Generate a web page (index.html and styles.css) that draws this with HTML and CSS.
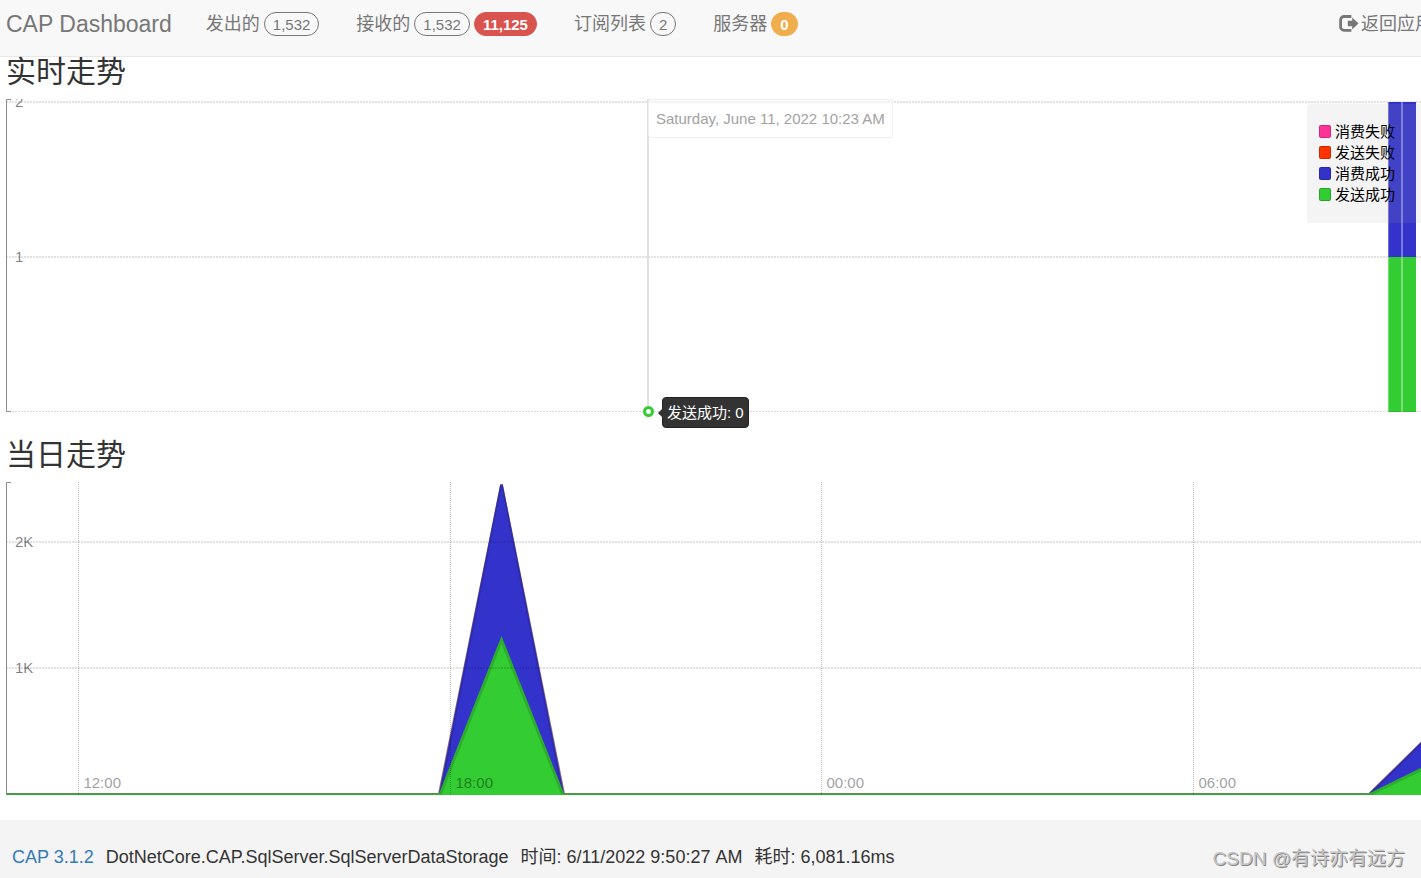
FILE: index.html
```html
<!DOCTYPE html>
<html lang="zh-CN">
<head>
<meta charset="utf-8">
<title>CAP Dashboard</title>
<link rel="stylesheet" href="styles.css">
</head>
<body>
<header class="navbar">
  <a class="brand" href="#">CAP Dashboard</a>
  <nav class="nav">
    <a class="nav-item" href="#published">发出的 <span class="badge">1,532</span></a>
    <a class="nav-item" href="#received">接收的 <span class="badge">1,532</span><span class="badge badge-danger">11,125</span></a>
    <a class="nav-item" href="#subscribers">订阅列表 <span class="badge">2</span></a>
    <a class="nav-item" href="#nodes">服务器 <span class="badge badge-warning">0</span></a>
  </nav>
  <a class="back" href="#app">
    <svg class="back-icon" width="20" height="18" viewBox="0 0 20 18" aria-hidden="true">
      <path d="M12.4 1.5H5A3.4 3.4 0 0 0 1.6 4.9v7A3.4 3.4 0 0 0 5 15.3h7.4" fill="none" stroke="currentColor" stroke-width="2.8"/>
      <path d="M8.8 5.8h4.4V2.6l6.3 5.9-6.3 5.9v-3.2H8.8z" fill="currentColor" stroke="#f8f8f8" stroke-width=".8" paint-order="stroke"/>
    </svg>返回应用</a>
</header>
<main class="page">
  <h3 class="title">实时走势</h3>
  <div class="chart">
    <svg class="plot" role="img" aria-label="实时走势">
      <g class="grid">
        <line x1="0" y1="3" x2="100%" y2="3"/>
        <line x1="0" y1="158" x2="100%" y2="158"/>
      </g>
      <svg class="anchor" x="100%">
        <rect class="fill-blue" x="-33" y="3" width="28" height="155"/>
        <rect class="fill-green" x="-33" y="158" width="28" height="155"/>
        <rect class="bar-edge" x="-33" y="3" width="1" height="310"/>
        <rect class="bar-gap" x="-20" y="3" width="2" height="310"/>
      </svg>
      <g class="grid">
        <line class="grid-base" x1="0" y1="312.5" x2="100%" y2="312.5"/>
      </g>
      <path class="axis" d="M5 .5H.5v312H5"/>
      <text class="tick tick-y" x="9" y="8">2</text>
      <text class="tick tick-y" x="9" y="163">1</text>
    </svg>
    <div class="cursor">
      <div class="cursor-date">Saturday, June 11, 2022 10:23 AM</div>
      <span class="cursor-dot"></span>
      <div class="cursor-value">发送成功: 0</div>
    </div>
    <ul class="legend">
      <li class="legend-row"><span class="swatch swatch-pink"></span>消费失败</li>
      <li class="legend-row"><span class="swatch swatch-red"></span>发送失败</li>
      <li class="legend-row"><span class="swatch swatch-blue"></span>消费成功</li>
      <li class="legend-row"><span class="swatch swatch-green"></span>发送成功</li>
    </ul>
  </div>
  <h3 class="title title-next">当日走势</h3>
  <div class="chart">
    <svg class="plot" role="img" aria-label="当日走势">
      <svg width="100%" height="313" viewBox="0 0 1415 313" preserveAspectRatio="none">
        <path class="fill-blue" d="M433 313L495 3h1L558 313ZM1363 313L1415 261V313Z"/>
        <path class="line line-pink" d="M0 312H433L495 3h1L558 312H1363L1416 260"/>
        <path class="line line-blue" d="M434 312L495 4h1L557 312M1364 312L1416 261"/>
        <path class="fill-green" d="M433 313L495.5 157 558 313ZM1363 313L1415 287V313Z"/>
        <path class="line line-green" d="M0 313H434L495.5 158 557 313H1363L1416 287"/>
      </svg>
      <g class="grid">
        <line x1="0" y1="60" x2="100%" y2="60"/>
        <line x1="0" y1="186" x2="100%" y2="186"/>
        <line class="grid-time" x1="5.12%" y1="0" x2="5.12%" y2="313"/>
        <line class="grid-time" x1="31.41%" y1="0" x2="31.41%" y2="313"/>
        <line class="grid-time" x1="57.63%" y1="0" x2="57.63%" y2="313"/>
        <line class="grid-time" x1="83.92%" y1="0" x2="83.92%" y2="313"/>
      </g>
      <path class="axis" d="M5 .5H.5V312"/>
      <text class="tick tick-y" x="9" y="65">2K</text>
      <text class="tick tick-y" x="9" y="191">1K</text>
      <text class="tick" x="5.12%" y="306" dx="5">12:00</text>
      <text class="tick" x="31.41%" y="306" dx="5">18:00</text>
      <text class="tick" x="57.63%" y="306" dx="5">00:00</text>
      <text class="tick" x="83.92%" y="306" dx="5">06:00</text>
    </svg>
  </div>
</main>
<footer class="footer">
  <a class="version" href="#cap">CAP 3.1.2</a>
  <span>DotNetCore.CAP.SqlServer.SqlServerDataStorage</span>
  <span>时间: 6/11/2022 9:50:27 AM</span>
  <span>耗时: 6,081.16ms</span>
  <span class="watermark">CSDN @有诗亦有远方</span>
</footer>
</body>
</html>
```
FILE: styles.css
```css
* {
  box-sizing: border-box;
}

body {
  margin: 0;
  min-height: 100vh;
  display: flex;
  flex-direction: column;
  overflow-x: hidden;
  background: #fff;
  color: #333;
  font-family: "Liberation Sans", "Noto Sans CJK SC", sans-serif;
  font-size: 18px;
}

a {
  text-decoration: none;
}

/* Top bar */
.navbar {
  display: flex;
  align-items: center;
  padding: 12px 0 20px 6px;
  background: #f8f8f8;
  border-bottom: 1px solid #e7e7e7;
  color: #777;
  line-height: 24px;
  white-space: nowrap;
}

.navbar a {
  color: inherit;
}

.brand {
  margin-right: 34px;
  font-size: 23px;
}

.nav {
  display: flex;
  gap: 37px;
}

.nav-item {
  display: flex;
  align-items: center;
  gap: 4px;
}

.badge {
  height: 24px;
  padding: 0 8px;
  border: 1px solid #777;
  border-radius: 12px;
  font-size: 15px;
  line-height: 23px;
}

.badge-danger,
.badge-warning {
  color: #fff;
  font-weight: bold;
}

.badge-danger {
  border-color: #d9534f;
  background: #d9534f;
}

.badge-warning {
  border-color: #f0ad4e;
  background: #f0ad4e;
}

.back {
  display: flex;
  align-items: center;
  gap: 2px;
  margin-left: auto;
  margin-right: -12px;
}

/* Charts */
.page {
  padding: 0 0 25px 6px;
}

.title {
  margin: 0 0 12px;
  font-size: 30px;
  font-weight: normal;
  line-height: 30px;
}

.title-next {
  margin-top: 28px;
}

.chart {
  position: relative;
}

.plot {
  display: block;
  width: 100%;
  height: 313px;
}

.anchor {
  overflow: visible;
}

.fill-blue {
  fill: #3333cc;
}

.fill-green {
  fill: #33cc33;
}

.bar-edge {
  fill: rgba(255, 255, 255, 0.3);
}

.bar-gap {
  fill: rgba(255, 255, 255, 0.35);
}

.line {
  fill: none;
  stroke-width: 2px;
}

.line-pink {
  stroke: #8f6a80;
}

.line-blue {
  stroke: #2c2cae;
}

.line-green {
  stroke: #2dae2d;
  stroke-width: 3px;
}

.grid line {
  stroke: rgba(0, 0, 0, 0.24);
  stroke-dasharray: 2 1;
}

.grid .grid-base {
  stroke: rgba(0, 0, 0, 0.14);
}

.grid .grid-time {
  stroke: rgba(0, 0, 0, 0.28);
  stroke-dasharray: 1 1;
}

.axis {
  fill: none;
  stroke: #8c8c8c;
}

.tick {
  fill: rgba(0, 0, 0, 0.4);
  font-size: 15px;
}

.tick-y {
  fill: rgba(0, 0, 0, 0.5);
}

.cursor {
  position: absolute;
  top: 0;
  bottom: 0;
  left: 45.3%;
  width: 2px;
  background: #e0e0e0;
}

.cursor-date {
  position: absolute;
  top: 0;
  left: 1px;
  padding: 10px 7px;
  border: 1px solid #eee;
  border-radius: 3px;
  background: rgba(255, 255, 255, 0.5);
  color: #a2a2a2;
  font-size: 15px;
  line-height: 17px;
  white-space: nowrap;
}

.cursor-dot {
  position: absolute;
  bottom: -5px;
  left: -4px;
  width: 11px;
  height: 11px;
  border: 3px solid #33cc33;
  border-radius: 50%;
  background: #fff;
}

.cursor-value {
  position: absolute;
  bottom: -16px;
  left: 15px;
  padding: 0 4px;
  border: 1px solid #222;
  border-radius: 4px;
  background: #333;
  color: #fff;
  font-size: 15px;
  line-height: 29px;
  white-space: nowrap;
}

.cursor-value::before {
  content: "";
  position: absolute;
  top: 10px;
  left: -5px;
  border: 5px solid transparent;
  border-left-width: 0;
  border-right-color: #333;
}

.legend {
  position: absolute;
  top: 5px;
  right: 0;
  margin: 0;
  padding: 17px 26px 18px 12px;
  border-radius: 3px 0 0 3px;
  background: rgba(173, 169, 169, 0.13);
  color: #000;
  font-size: 15px;
  line-height: 21px;
  list-style: none;
}

.legend-row {
  display: flex;
  align-items: center;
  gap: 4px;
}

.swatch {
  width: 12px;
  height: 13px;
  border: 1px solid rgba(0, 0, 0, 0.2);
  border-radius: 2px;
}

.swatch-pink {
  background: #ff3399;
}

.swatch-red {
  background: #ff3300;
}

.swatch-blue {
  background: #3333cc;
}

.swatch-green {
  background: #33cc33;
}

/* Footer */
.footer {
  flex: 1;
  display: flex;
  gap: 12px;
  padding: 25px 16px 9px 12px;
  background: #f4f4f4;
  line-height: 24px;
  white-space: nowrap;
}

.version {
  color: #337ab7;
}

.watermark {
  margin-left: auto;
  color: #c4c4c4;
  font-size: 19px;
  line-height: 28px;
  text-shadow: 1px 1px 0 #858585;
}
```
